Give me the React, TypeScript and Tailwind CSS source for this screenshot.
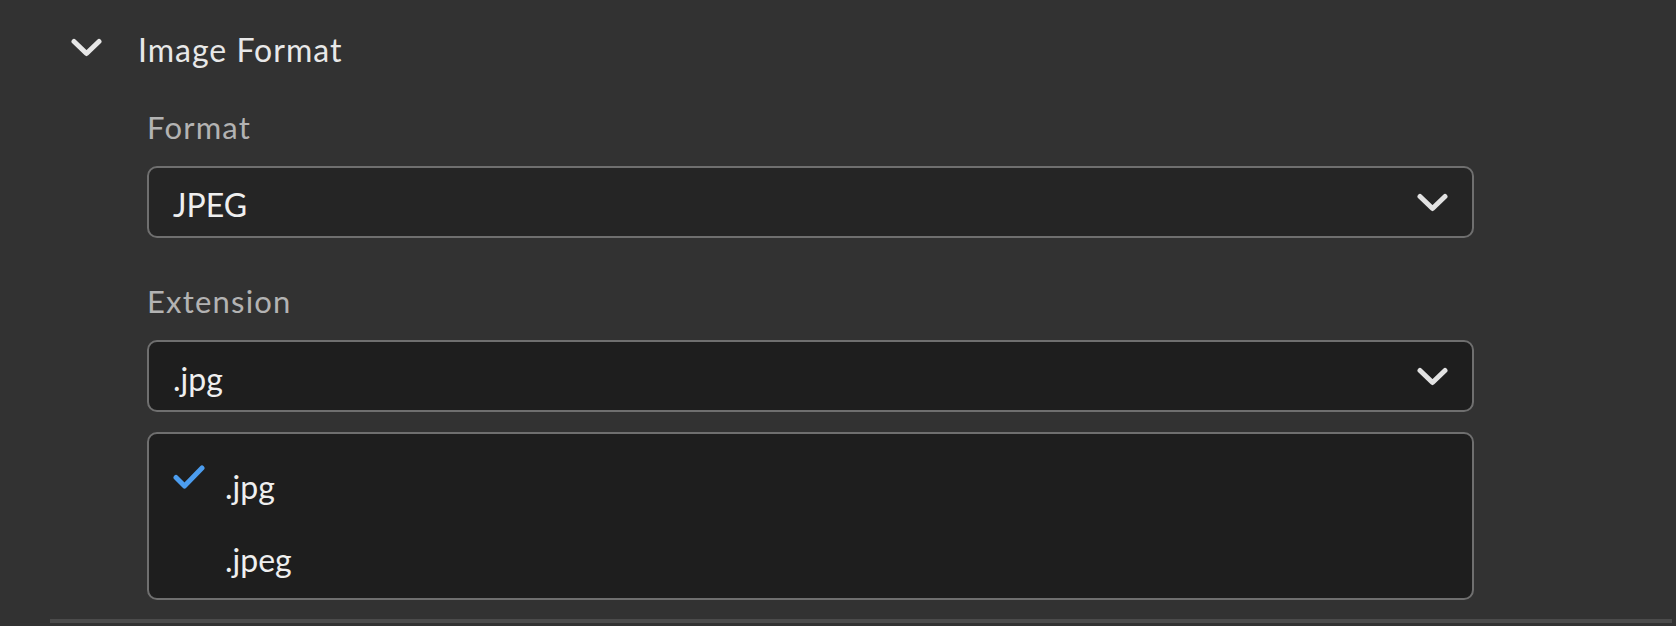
import { ReactNode } from "react";

const font = { fontFamily: "Lato, 'Open Sans', 'Liberation Sans', sans-serif" };

function Chevron({ className }: { className?: string }) {
  return (
    <svg viewBox="0 0 31 19" className={className} fill="none">
      <path
        d="M3 3.5 L15.5 15.5 L28 3.5"
        stroke="currentColor"
        strokeWidth="5"
        strokeLinecap="round"
        strokeLinejoin="round"
      />
    </svg>
  );
}

function Check() {
  return (
    <svg viewBox="0 0 32 24" className="w-[32px] h-[24px] text-[#4c9def]" fill="none">
      <path
        d="M3 12.5 L11.5 21 L29 3"
        stroke="currentColor"
        strokeWidth="5"
        strokeLinecap="round"
        strokeLinejoin="round"
      />
    </svg>
  );
}

function Label({ children, className }: { children: ReactNode; className?: string }) {
  return (
    <div
      className={
        "h-[40px] text-[31px] leading-[40px] tracking-[1.2px] text-[#b3b3b3] " + (className ?? "")
      }
    >
      {children}
    </div>
  );
}

function Select({ value, open }: { value: string; open?: boolean }) {
  return (
    <div
      className={
        "flex items-center justify-between h-[72px] border-2 border-[#6f6f6f] rounded-[10px] pl-[24px] pr-[24px] " +
        (open ? "bg-[#1e1e1e]" : "bg-[#252525]")
      }
    >
      <span className="pt-[5px] text-[32px] leading-[40px] text-[#efefef]">{value}</span>
      <Chevron className="w-[31px] h-[19px] text-[#e2e2e2]" />
    </div>
  );
}

export default function App() {
  return (
    <div className="w-[1676px] h-[626px] bg-[#323232] overflow-hidden" style={font}>
      <div className="pt-[30px]">
        {/* section header */}
        <div className="flex h-[40px] pl-[71px]">
          <Chevron className="w-[31px] h-[19px] mt-[8px] text-[#e6e6e6]" />
          <span className="ml-[36px] text-[32px] leading-[40px] tracking-[1px] text-[#e8e8e8]">
            Image Format
          </span>
        </div>

        <div className="ml-[147px] w-[1327px]">
          <Label className="mt-[37px]">Format</Label>
          <div className="mt-[19px]">
            <Select value="JPEG" />
          </div>

          <Label className="mt-[43px]">Extension</Label>
          <div className="mt-[19px]">
            <Select value=".jpg" open />
          </div>

          {/* open menu */}
          <div className="mt-[20px] h-[168px] border-2 border-[#6f6f6f] rounded-[10px] bg-[#1e1e1e] pt-[17px]">
            <div className="flex h-[73px] pl-[24px]">
              <div className="w-[52px] pt-[14px]">
                <Check />
              </div>
              <span className="pt-[16px] text-[32px] leading-[40px] text-[#efefef]">.jpg</span>
            </div>
            <div className="flex h-[73px] pl-[76px]">
              <span className="pt-[16px] text-[32px] leading-[40px] text-[#efefef]">.jpeg</span>
            </div>
          </div>
        </div>

        <div className="mt-[19px] ml-[50px] w-[1622px] h-[4px] bg-[#4b4b4b]" />
      </div>
    </div>
  );
}
